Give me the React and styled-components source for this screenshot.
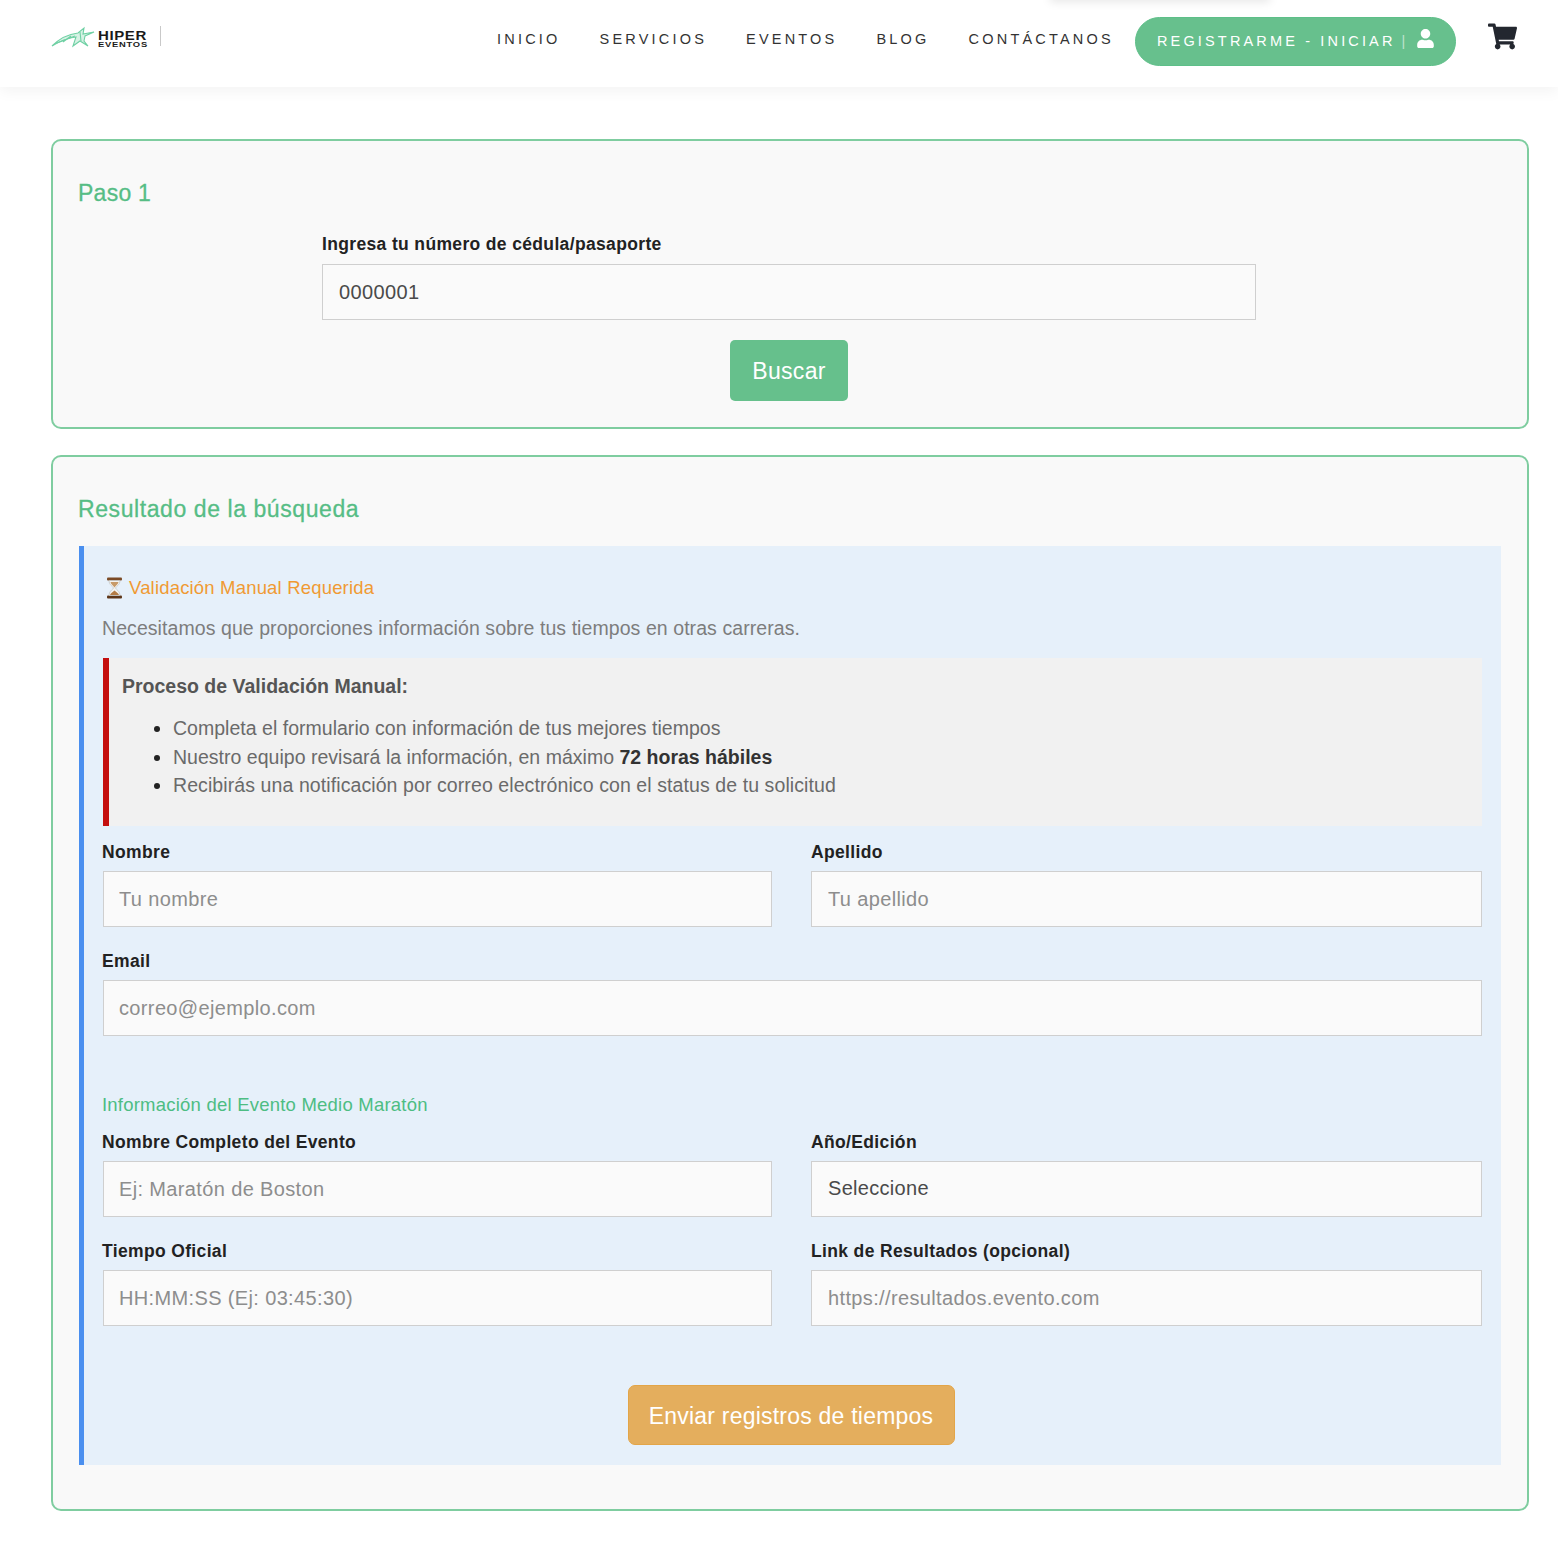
import React from "react";
import styled, { createGlobalStyle } from "styled-components";
import { FaUser, FaShoppingCart } from "react-icons/fa";

const GlobalStyle = createGlobalStyle`
  html, body { margin: 0; padding: 0; background: #fff; }
  body { font-family: "Liberation Sans", Arial, sans-serif; color: #222; }
  * { box-sizing: border-box; }
`;

const Page = styled.div`
  width: 1558px;
  height: 1544px;
  overflow: hidden;
  position: relative;
`;

const TopShadow = styled.div`
  position: absolute;
  left: 1050px;
  top: -10px;
  width: 220px;
  height: 10px;
  box-shadow: 0 2px 10px rgba(0, 0, 0, 0.1);
`;

const Header = styled.header`
  height: 87px;
  background: #fff;
  box-shadow: 0 4px 14px rgba(0, 0, 0, 0.05);
  display: flex;
  align-items: flex-start;
  padding: 0 40px 0 51px;
`;

const Logo = styled.div`
  display: flex;
  align-items: center;
  height: 24px;
  margin-top: 25px;
  width: 446px;
`;

const LogoWords = styled.div`
  display: flex;
  flex-direction: column;
  width: 52px;
  margin: 3px 0 0 2px;
  color: #1a1a1a;
  font-weight: 700;
  line-height: 1;
`;

const LogoTop = styled.span`
  font-size: 12.5px;
  letter-spacing: 0.5px;
  line-height: 12px;
  transform: scaleX(1.2);
  transform-origin: left center;
`;

const LogoBottom = styled.span`
  font-size: 7.5px;
  letter-spacing: 0.6px;
  line-height: 6px;
  transform: scaleX(1.25);
  transform-origin: left center;
`;

const LogoBar = styled.span`
  width: 1px;
  height: 20px;
  background: #c9c9c9;
  margin-left: 10px;
  margin-top: -3px;
`;

const Nav = styled.nav`
  display: flex;
  gap: 39px;
  margin-top: 31px;
  width: 638px;
`;

const NavLink = styled.a`
  font-size: 14.5px;
  letter-spacing: 3.2px;
  line-height: 17px;
  color: #333;
  white-space: nowrap;
`;

const LoginButton = styled.button`
  height: 49px;
  width: 321px;
  margin-top: 17px;
  border: 1px solid #5dbf88;
  border-radius: 25px;
  background: #67c08d;
  color: #fff;
  font: 400 14.5px "Liberation Sans", Arial, sans-serif;
  letter-spacing: 3.15px;
  padding: 0 0 2px 21px;
  display: flex;
  align-items: center;
  white-space: nowrap;

  svg {
    font-size: 19px;
    margin-left: 8px;
    margin-top: -5px;
  }
`;

const LoginDivider = styled.span`
  opacity: 0.55;
  font-weight: 400;
  margin-left: 6px;
`;

const Cart = styled.div`
  margin: 22px 0 0 32px;
  color: #23272f;
  font-size: 29px;
  line-height: 0;
`;

const Main = styled.main`
  padding: 52px 29px 0 51px;
  display: flex;
  flex-direction: column;
  gap: 26px;
`;

const Card = styled.section`
  border: 2px solid #7fcda0;
  border-radius: 10px;
  background: #f9f9f9;
  padding: 0 26px;
  height: ${(p) => p.$height}px;
`;

const CardTitle = styled.h2`
  margin: 0 0 0 -1px;
  padding-top: 39px;
  font-size: 23px;
  line-height: 27px;
  letter-spacing: ${(p) => p.$spacing}px;
  font-weight: 400;
  color: #56bd85;
  -webkit-text-stroke: 0.3px #56bd85;
`;

const Label = styled.label`
  display: block;
  font-size: 17.5px;
  line-height: 20px;
  font-weight: 700;
  letter-spacing: 0.35px;
  color: #222;
  margin-bottom: 9px;
`;

const Input = styled.input`
  display: block;
  width: 100%;
  height: 56px;
  border: 1px solid #cfcfcf;
  background: #fafafa;
  padding: 1px 16px 0;
  font: 400 20px "Liberation Sans", Arial, sans-serif;
  letter-spacing: 0.36px;
  color: #4a4a4a;
  border-radius: 0;
  outline: none;

  &::placeholder {
    color: #8d8d8d;
    opacity: 1;
  }
`;

const SearchForm = styled.div`
  width: 936px;
  margin: 27px auto 0;
  padding-right: 2px;

  ${Label} {
    margin-bottom: 10px;
  }
`;

const SelectBox = styled.div`
  height: 56px;
  border: 1px solid #cfcfcf;
  background: #fafafa;
  padding: 0 16px 2px;
  font-size: 20px;
  letter-spacing: 0.3px;
  color: #4a4a4a;
  display: flex;
  align-items: center;
`;

const Centered = styled.div`
  display: flex;
  justify-content: center;
  margin-top: ${(p) => p.$top}px;
`;

const SearchButton = styled.button`
  width: 118px;
  height: 61px;
  border: none;
  border-radius: 5px;
  background: #66c08c;
  color: #fff;
  font: 400 23px "Liberation Sans", Arial, sans-serif;
  letter-spacing: 0.3px;
  padding: 2px 0 0;
`;

const SendButton = styled.button`
  width: 327px;
  height: 60px;
  margin-right: 2px;
  border: 1px solid #e3a548;
  border-radius: 7px;
  background: #e4ae5d;
  color: #fff;
  font: 400 23px "Liberation Sans", Arial, sans-serif;
  letter-spacing: 0.22px;
  padding: 2px 0 0;
`;

const ResultBox = styled.div`
  margin-top: 23px;
  height: 919px;
  background: #e6f0fa;
  border-left: 5px solid #4a8fef;
  padding: 0 19px 0 18px;
`;

const NoticeTitle = styled.div`
  padding-top: 29px;
  display: flex;
  align-items: center;
  font-size: 18.5px;
  line-height: 26px;
  letter-spacing: 0.18px;
  color: #f09a33;

  svg {
    margin: 0 5px 0 3px;
  }
`;

const NoticeText = styled.p`
  margin: 14px 0 0;
  font-size: 19.5px;
  line-height: 26px;
  letter-spacing: 0.07px;
  color: #7d7d7d;
`;

const ProcessBox = styled.div`
  margin: 17px 0 0 1px;
  height: 168px;
  background: #f1f1f1;
  border-left: 6px solid #c40f0f;
  padding: 16px 12px 0 13px;
  color: #6a6a6a;
`;

const ProcessTitle = styled.div`
  font-size: 19.5px;
  line-height: 24px;
  font-weight: 700;
  color: #555;
`;

const ProcessList = styled.ul`
  margin: 16px 0 0;
  padding-left: 51px;
  font-size: 19.5px;
  line-height: 28.5px;
  letter-spacing: 0.02px;

  li::marker {
    color: #222;
  }

  li:last-child {
    letter-spacing: 0.09px;
  }

  strong {
    color: #333;
    letter-spacing: 0;
  }
`;

const Grid = styled.div`
  display: grid;
  grid-template-columns: 670px 671px;
  column-gap: 39px;
  row-gap: 24px;
  margin: ${(p) => p.$top}px 0 0;
`;

const Field = styled.div`
  padding-left: ${(p) => (p.$right ? 0 : 1)}px;
  grid-column: ${(p) => (p.$wide ? "1 / -1" : "auto")};

  ${Label} {
    margin-left: ${(p) => (p.$right ? 0 : -1)}px;
  }

  ${Input} {
    padding-left: ${(p) => (p.$right ? 16 : 15)}px;
  }
`;

const SectionTitle = styled.div`
  margin-top: 56px;
  font-size: 18.5px;
  line-height: 26px;
  letter-spacing: 0.22px;
  color: #4dbd83;
`;

function Bird() {
  return (
    <svg width="45" height="22" viewBox="0 0 45 20" fill="#d6f2e4" stroke="#6fd0a4" strokeWidth="1.1">
      <path d="M1 19 C8 12 18 7 27 6 L33 1 L32 7 L43 5 L34 9 L33 14 L37 19 L29 14 L22 19 L25 10 C17 11 9 14 1 19 Z" />
      <path d="M6 16 L24 9 M12 15 L20 9 M29 5 L30 14" fill="none" />
    </svg>
  );
}

function Hourglass() {
  return (
    <svg width="19" height="22" viewBox="0 0 19 22">
      <rect x="2" y="0.5" width="15" height="3" rx="1" fill="#7b4a25" />
      <rect x="2" y="18.5" width="15" height="3" rx="1" fill="#5e3618" />
      <path d="M4 3.5 H15 C15 8 11 9.5 10.5 11 C11 12.5 15 14 15 18.5 H4 C4 14 8 12.5 8.5 11 C8 9.5 4 8 4 3.5 Z" fill="#f3f3f0" stroke="#b9b9b5" strokeWidth="0.6" />
      <path d="M5.5 5 H13.5 C13 7.5 10.5 8.5 9.5 10.5 C8.5 8.5 6 7.5 5.5 5 Z" fill="#c79a68" />
      <path d="M5 18 C6 15.5 8 15 9.5 13.5 C11 15 13 15.5 14 18 Z" fill="#b47c45" />
    </svg>
  );
}

const navItems = ["INICIO", "SERVICIOS", "EVENTOS", "BLOG", "CONTÁCTANOS"];

export default function App() {
  return (
    <Page>
      <GlobalStyle />
      <TopShadow />
      <Header>
        <Logo>
          <Bird />
          <LogoWords>
            <LogoTop>HIPER</LogoTop>
            <LogoBottom>EVENTOS</LogoBottom>
          </LogoWords>
          <LogoBar />
        </Logo>
        <Nav>
          {navItems.map((item) => (
            <NavLink key={item}>{item}</NavLink>
          ))}
        </Nav>
        <LoginButton>
          REGISTRARME - INICIAR<LoginDivider>|</LoginDivider>
          <FaUser />
        </LoginButton>
        <Cart>
          <FaShoppingCart />
        </Cart>
      </Header>

      <Main>
        <Card $height={290}>
          <CardTitle $spacing={0.25}>Paso 1</CardTitle>
          <SearchForm>
            <Label>Ingresa tu número de cédula/pasaporte</Label>
            <Input defaultValue="0000001" />
            <Centered $top={20}>
              <SearchButton>Buscar</SearchButton>
            </Centered>
          </SearchForm>
        </Card>

        <Card $height={1056}>
          <CardTitle $spacing={0.58}>Resultado de la búsqueda</CardTitle>
          <ResultBox>
            <NoticeTitle>
              <Hourglass />
              Validación Manual Requerida
            </NoticeTitle>
            <NoticeText>Necesitamos que proporciones información sobre tus tiempos en otras carreras.</NoticeText>
            <ProcessBox>
              <ProcessTitle>Proceso de Validación Manual:</ProcessTitle>
              <ProcessList>
                <li>Completa el formulario con información de tus mejores tiempos</li>
                <li>
                  Nuestro equipo revisará la información, en máximo <strong>72 horas hábiles</strong>
                </li>
                <li>Recibirás una notificación por correo electrónico con el status de tu solicitud</li>
              </ProcessList>
            </ProcessBox>

            <Grid $top={16}>
              <Field>
                <Label>Nombre</Label>
                <Input placeholder="Tu nombre" />
              </Field>
              <Field $right>
                <Label>Apellido</Label>
                <Input placeholder="Tu apellido" />
              </Field>
              <Field $wide>
                <Label>Email</Label>
                <Input placeholder="correo@ejemplo.com" />
              </Field>
            </Grid>

            <SectionTitle>Información del Evento Medio Maratón</SectionTitle>

            <Grid $top={14}>
              <Field>
                <Label>Nombre Completo del Evento</Label>
                <Input placeholder="Ej: Maratón de Boston" />
              </Field>
              <Field $right>
                <Label>Año/Edición</Label>
                <SelectBox>Seleccione</SelectBox>
              </Field>
              <Field>
                <Label>Tiempo Oficial</Label>
                <Input placeholder="HH:MM:SS (Ej: 03:45:30)" />
              </Field>
              <Field $right>
                <Label>Link de Resultados (opcional)</Label>
                <Input placeholder="https://resultados.evento.com" />
              </Field>
            </Grid>

            <Centered $top={59}>
              <SendButton>Enviar registros de tiempos</SendButton>
            </Centered>
          </ResultBox>
        </Card>
      </Main>
    </Page>
  );
}
